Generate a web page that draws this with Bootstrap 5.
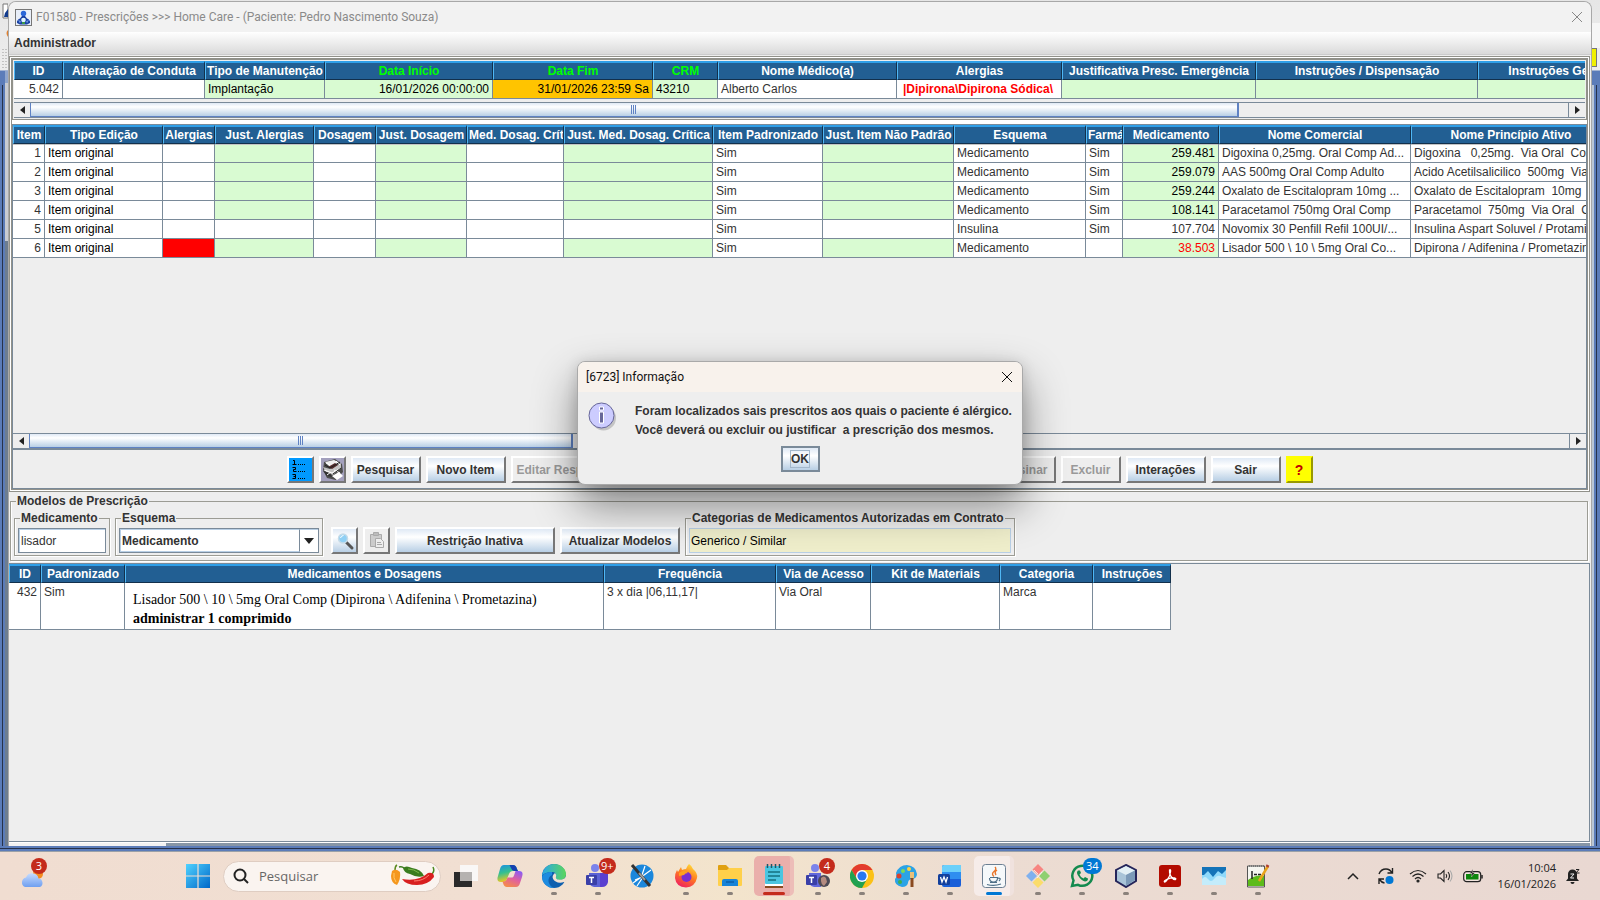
<!doctype html>
<html lang="pt-BR">
<head>
    <meta charset="utf-8">
    <meta name="viewport" content="width=device-width, initial-scale=1">
    <title>F01580 - Prescrições</title>
    <link href="https://cdn.jsdelivr.net/npm/bootstrap@5.3.3/dist/css/bootstrap.min.css" rel="stylesheet">
    <style>
        html, body { height: 100%; }
        body {
            display: flex;
            flex-direction: column;
            overflow: hidden;
            font-family: "Liberation Sans", Arial, sans-serif;
            font-size: 12px;
            line-height: 18px;
            color: #333;
            background: #eee;
        }
        svg { display: block; flex: none; }
        button { padding: 0; }

        /* Main application behind the window */
        .desk { flex: 1 1 0; min-height: 0; padding-top: 1px; background: linear-gradient(#e6e6e6 0, #ededed 70px, #5b7cb9 71px, #5b7cb9 100%); }
        .desk-row { flex: 1 1 0; min-height: 0; }
        .rail { width: 8px; flex: none; overflow: hidden; }
        .rail-top { height: 70px; }
        .rail-left { background: linear-gradient(90deg, transparent 2px, #26324a 2px, #26324a 3px, #5b7cb9 3px, #5b7cb9 5px, #6d7d90 5px) 0 84px no-repeat; }
        .rail-left .inner-frame { height: 170px; width: 3px; background: #c9ccd2; border-top: 12px solid #8fa5cc; }
        .rail-right { background: linear-gradient(90deg, #b9c6d6 2px, #5b7cb9 2px, #5b7cb9 4px, #26324a 4px, #26324a 5px, #5b7cb9 5px) 0 84px no-repeat; }
        .rail-yellow { height: 19px; width: 5px; background: #f0f000; border: 1px solid #777; border-left: 0; }
        .desk-foot { height: 6px; background: linear-gradient(#5b7cb9 2px, #26324a 2px, #26324a 3px, #5b7cb9 3px, #5b7cb9 5px, #9aa0a8 5px); }

        /* Prescription window */
        .win { flex: 1 1 0; min-width: 0; position: relative; display: flex; flex-direction: column; background: #eee; border: 1px solid #a8a8a8; border-bottom: 0; border-radius: 8px 8px 0 0; overflow: hidden; }
        .win-title { height: 30px; background: #f2f2f2; color: #8a8a8a; font-family: Roboto, "Noto Sans", sans-serif; font-size: 12px; padding: 0 8px 0 6px; }
        .win-menu { height: 22px; background: linear-gradient(#fff, #dadada); padding: 0 5px; }
        .plain-btn { border: 0; background: none; color: inherit; }
        .win-body { flex: 1 1 0; min-height: 0; padding: 1px 1px 0 0; border-top: 1px solid #ccc; }
        .outer-frame { border: 3px double #91918a; background: #fff; }
        .outer-frame > * { background: #eee; }
        .pane-head { border: 1px solid #91918a; padding: 1px 1px 1px 1px; margin-bottom: 4px; }
        .pane-head .hbar { margin-top: 3px; }
        .pane-items { border: 1px solid #7a8a99; border-bottom: 0; }
        .items-area { min-height: 308px; overflow: hidden; }
        .clip { overflow: hidden; }

        /* Data grids */
        .grid { table-layout: fixed; border-collapse: separate; border-spacing: 0; }
        .grid th, .grid td { height: 19px; overflow: hidden; white-space: pre; }
        .grid th { background: #225f93; color: #fff; text-align: center; line-height: 16px; padding: 0 1px; border-top: 2px solid #2f9fe8; border-left: 1px solid #4fb7f5; border-right: 1px solid #12304c; border-bottom: 1px solid #12304c; }
        .grid td { background: #fff; padding: 0 3px; border-right: 1px solid #7a8a99; border-bottom: 1px solid #7a8a99; }
        .grid th.key { color: #0f0; }
        .grid th.cut { text-align: left; padding-right: 0; }
        .grid td.ed { background: #d9fbd2; color: #000; }
        .grid td.num { text-align: right; }
        .grid td.blk { color: #000; }
        .grid td.hot { background: #f00; }
        .grid td.until { background: #ffc400; color: #000; text-align: right; }
        .grid td.bad { color: #f00; }
        .grid td.drug { font-weight: bold; padding-left: 6px; }
        .grid-items tbody tr:first-child td { box-shadow: inset 0 1px #c4c4c4; }
        .grid-models td { height: 47px; vertical-align: top; }
        .grid-models .dose { font-family: "Liberation Serif", "Times New Roman", serif; font-size: 14px; line-height: 19px; color: #000; padding: 7px 8px 0; }

        /* Scroll bars */
        .hbar { height: 16px; border-top: 1px solid #7a8a99; border-bottom: 1px solid #7a8a99; background: #eee; display: flex; }
        .hbar button { width: 16px; border: 0; background: #eee; display: flex; align-items: center; justify-content: center; }
        .hbar .track { flex: 1 1 0; border-left: 1px solid #5f82c3; border-right: 1px solid #7a8a99; display: flex; }
        .hbar .thumb { display: flex; align-items: center; justify-content: center; border-right: 2px solid #5f82c3; border-bottom: 1px solid #5f82c3; background: linear-gradient(#dfe9f5, #fff 30%, #b8cfe5); }

        /* Raised buttons */
        .jbtn { height: 27px; border: 2px solid; border-color: #fff #777 #777 #fff; background: linear-gradient(#dfe9f5, #fff 35%, #b8cfe5); color: #333; font-weight: bold; display: flex; align-items: center; justify-content: center; white-space: nowrap; flex: none; }
        .jbtn:disabled { background: #eee; color: #999; }
        .w27 { width: 27px; } .w60 { width: 60px; } .w70 { width: 70px; } .w80 { width: 80px; }
        .w110 { width: 110px; } .w120 { width: 120px; } .w160 { width: 160px; }
        .mid-space { width: 365px; }
        .actions { border: 1px solid #7a8a99; padding: 6px 0 5px; gap: 5px; }
        .btn-list { background: #09f; }
        .btn-help { background: #ff0; border-color: #ff0 #999900 #999900 #ff0; color: #c00000; font-size: 14px; }

        /* Titled groups */
        .group { border: 1px solid #9c9c94; box-shadow: inset 1px 0 #fff, 1px 1px #fff; min-width: 0; }
        .group legend { float: none; width: auto; margin: 0; padding: 0 1px; font-size: 12px; font-weight: bold; line-height: 14px; margin-left: 2px; }
        .models { margin: 2px 2px 2px 1px; padding: 3px 3px 4px; }
        .models-row { gap: 5px; }
        .tools { margin: 0 0 2px 3px; }
        .group-in { padding: 3px 3px 2px; }
        .group-in input, .combo { height: 25px; border: 1px solid #7a8a99; box-shadow: inset 1px 1px #b8cfe5; }
        .group-in input { display: block; padding: 0 2px; color: #333; background: #fff; }
        .w88 { width: 88px; }
        .combo { width: 200px; background: #fff; }
        .combo select { appearance: none; border: 1px solid #b8cfe5; border-right: 1px solid #7a8a99; background: none; padding: 0 1px; font-weight: bold; color: #333; flex: 1 1 0; min-width: 0; }
        .combo span { width: 18px; display: flex; align-items: center; justify-content: center; }
        .group-in .cats { width: 322px; border-color: #b8cfe5; box-shadow: none; color: #000; background: #efeecb; padding: 0 1px; }
        .lower { flex: 1 1 0; min-height: 0; border: 1px solid #7a8a99; border-left: 0; }
        .win-foot { height: 4px; background: linear-gradient(90deg, #f2f2f2 157px, #8796a6 157px); border-top: 1px solid #fff; }

        /* Message dialog */
        .dlg-layer { position: absolute; inset: 0 0 3px 0; display: flex; align-items: center; justify-content: center; }
        .dlg { width: 446px; border: 1px solid #a9a9a9; border-radius: 8px; overflow: hidden; background: #eee; box-shadow: 0 20px 44px rgba(0,0,0,.45), 0 2px 14px rgba(0,0,0,.15); }
        .dlg-title { height: 30px; background: #f8f2ec; color: #111; font-family: Roboto, "Noto Sans", sans-serif; padding: 0 9px 0 8px; }
        .dlg-text { font-weight: bold; line-height: 19px; white-space: pre; }
        .dlg-main { padding: 10px 0 6px 10px; gap: 17px; }
        .dlg-ok { width: 39px; height: 26px; border: 2px solid #7a8a99; background: linear-gradient(#dfe9f5, #fff 35%, #b8cfe5); font-weight: bold; color: #333; margin-bottom: 12px; display: flex; align-items: center; justify-content: center; }
        .dlg-ok span { border: 1px solid #a3b8cc; line-height: 16px; }

        /* Taskbar */
        .taskbar { height: 48px; flex: none; background: linear-gradient(90deg, #f0ddd1, #f1dfd2 30%, #f3e4cc 46%, #ecdcd2 62%, #e9d8d2); font-family: "Open Sans", "Noto Sans", sans-serif; color: #222; }
        .weather { width: 176px; padding-left: 20px; }
        .task { width: 44px; height: 48px; border: 0; background: none; position: relative; display: flex; align-items: center; justify-content: center; flex: none; }
        .task.on::after { content: ""; position: absolute; bottom: 5px; left: 19px; width: 6px; height: 3px; border-radius: 2px; background: #8a817b; }
        .task.alert-on::before, .task.cur::before { content: ""; position: absolute; inset: 4px 2px; border-radius: 5px; background: #eaafab; border-right: 4px solid #edbdb8; }
        .task.cur::before { background: #f6ece9; border-right-color: #f0e2de; }
        .task.alert-on::after { left: 11px; width: 22px; background: #c42b1c; }
        .task.cur::after { left: 14px; width: 16px; background: #0078d4; }
        .task svg { position: relative; }
        .bubble { position: absolute; top: 6px; left: 23px; min-width: 16px; height: 16px; border-radius: 8px; background: #c42b1c; color: #fff; font-size: 11px; line-height: 16px; text-align: center; padding: 0 2px; }
        .bubble.blue { background: #0078d4; padding: 0 3px; }
        .weather .bubble { top: -3px; left: 31px; }
        .searchbox { width: 218px; height: 31px; border-radius: 16px; background: #faf4f0; border: 1px solid #dfcdc2; padding: 0 4px 0 9px; margin: 0 3px; gap: 10px; }
        .searchbox input { border: 0; background: none; outline: 0; min-width: 0; flex: 1 1 0; font-size: 13px; padding: 0; }
        .searchbox input::placeholder { color: #666; opacity: 1; }
        .tray { padding-right: 20px; gap: 10px; }
        .clock { font-size: 11px; line-height: 16px; text-align: right; margin-left: 5px; }
    </style>
</head>
<body>
    <main class="desk d-flex flex-column">
        <div class="desk-row d-flex">
            <div class="rail rail-left">
                <div class="rail-top">
                    <svg width="8" height="70"><path d="M3 3h5v14H3z" fill="#fff" stroke="#777"/><path d="M5 12l3-4v8H4z" fill="#123b8c"/><path d="M8 29q-3 3 0 7z" fill="#e08030"/><path d="M3 48v20M6 48v20" stroke="#999" stroke-dasharray="1 2"/></svg>
                </div>
                <div class="d-flex justify-content-end"><div class="inner-frame"></div></div>
            </div>

            <section class="win">
                <header class="win-title d-flex align-items-center justify-content-between">
                    <div class="d-flex align-items-center gap-1">
                        <svg width="17" height="17" viewBox="0 0 17 17"><rect x=".5" y=".5" width="16" height="16" fill="#e8eef8" stroke="#777"/><circle cx="8.500" cy="4.500" r="2.700" fill="#2a66d8"/><path d="M2 14q-.5-3 3-4.500L7 7h3l2 2.500q3.500 1.500 3 4.500l-3 1.500H5z" fill="#173fa3"/><circle cx="8.500" cy="11" r="2.300" fill="#dff4ff"/><path d="M3 11l3 1-1 2.500zM14 11l-3 1 1 2.500z" fill="#6d93e0"/><path d="M7 13h3v2H7z" fill="#3a9a4a"/></svg>
                        <span>F01580 - Prescrições &gt;&gt;&gt; Home Care - (Paciente: Pedro Nascimento Souza)</span>
                    </div>
                    <button class="plain-btn" type="button" aria-label="Fechar janela"><svg width="12" height="12"><path d="M1 1l10 10M11 1L1 11" stroke="#888" fill="none"/></svg></button>
                </header>
                <nav class="win-menu d-flex align-items-center"><button class="plain-btn fw-bold" type="button">Administrador</button></nav>

                <div class="win-body d-flex flex-column">
                    <div class="outer-frame">
                        <!-- Cabeçalho da prescrição -->
                        <div class="pane-head">
                            <div class="clip">
                                <table class="grid" style="width:1626px">
                                    <colgroup><col style="width:49px"><col style="width:142px"><col style="width:120px"><col style="width:168px"><col style="width:160px"><col style="width:65px"><col style="width:179px"><col style="width:165px"><col style="width:194px"><col style="width:222px"><col style="width:162px"></colgroup>
                                    <thead><tr><th>ID</th><th>Alteração de Conduta</th><th>Tipo de Manutenção</th><th class="key">Data Início</th><th class="key">Data Fim</th><th class="key">CRM</th><th>Nome Médico(a)</th><th>Alergias</th><th>Justificativa Presc. Emergência</th><th>Instruções / Dispensação</th><th>Instruções Gerais</th></tr></thead>
                                    <tbody><tr><td class="num">5.042</td><td></td><td class="ed">Implantação</td><td class="ed num">16/01/2026 00:00:00</td><td class="until">31/01/2026 23:59 Sa</td><td class="ed">43210</td><td>Alberto Carlos</td><td class="bad drug">|Dipirona\Dipirona Sódica\</td><td class="ed"></td><td class="ed"></td><td class="ed"></td></tr></tbody>
                                </table>
                            </div>
                            <div class="hbar">
                                <button type="button" aria-label="Rolar para a esquerda"><svg width="5" height="8"><path d="M5 0v8L0 4z" fill="#222"/></svg></button>
                                <div class="track"><div class="thumb" style="width:78.6%"><svg width="6" height="9"><path d="M.5 0v9M2.500 0v9M4.500 0v9" stroke="#5f82c3"/></svg></div></div>
                                <button type="button" aria-label="Rolar para a direita"><svg width="5" height="8"><path d="M0 0v8l5-4z" fill="#222"/></svg></button>
                            </div>
                        </div>

                        <!-- Itens prescritos -->
                        <div class="pane-items">
                            <div class="items-area">
                                <table class="grid grid-items" style="width:1598px">
                                    <colgroup><col style="width:32px"><col style="width:118px"><col style="width:52px"><col style="width:99px"><col style="width:62px"><col style="width:91px"><col style="width:97px"><col style="width:149px"><col style="width:110px"><col style="width:131px"><col style="width:132px"><col style="width:37px"><col style="width:96px"><col style="width:192px"><col style="width:200px"></colgroup>
                                    <thead><tr><th>Item</th><th>Tipo Edição</th><th>Alergias</th><th>Just. Alergias</th><th>Dosagem</th><th>Just. Dosagem</th><th class="cut">Med. Dosag. Crít</th><th>Just. Med. Dosag. Crítica</th><th>Item Padronizado</th><th>Just. Item Não Padrão</th><th>Esquema</th><th class="cut">Farmá</th><th>Medicamento</th><th>Nome Comercial</th><th>Nome Princípio Ativo</th></tr></thead>
                                    <tbody>
                                        <tr><td class="num">1</td><td class="blk">Item original</td><td></td><td class="ed"></td><td></td><td class="ed"></td><td></td><td class="ed"></td><td>Sim</td><td class="ed"></td><td>Medicamento</td><td>Sim</td><td class="ed num">259.481</td><td>Digoxina 0,25mg. Oral Comp Ad...</td><td>Digoxina   0,25mg.  Via Oral  Comp</td></tr>
                                        <tr><td class="num">2</td><td class="blk">Item original</td><td></td><td class="ed"></td><td></td><td class="ed"></td><td></td><td class="ed"></td><td>Sim</td><td class="ed"></td><td>Medicamento</td><td>Sim</td><td class="ed num">259.079</td><td>AAS 500mg Oral Comp Adulto</td><td>Acido Acetilsalicilico  500mg  Via</td></tr>
                                        <tr><td class="num">3</td><td class="blk">Item original</td><td></td><td class="ed"></td><td></td><td class="ed"></td><td></td><td class="ed"></td><td>Sim</td><td class="ed"></td><td>Medicamento</td><td>Sim</td><td class="ed num">259.244</td><td>Oxalato de Escitalopram 10mg ...</td><td>Oxalato de Escitalopram  10mg</td></tr>
                                        <tr><td class="num">4</td><td class="blk">Item original</td><td></td><td class="ed"></td><td></td><td class="ed"></td><td></td><td class="ed"></td><td>Sim</td><td class="ed"></td><td>Medicamento</td><td>Sim</td><td class="ed num">108.141</td><td>Paracetamol 750mg Oral Comp</td><td>Paracetamol  750mg  Via Oral  Comp</td></tr>
                                        <tr><td class="num">5</td><td class="blk">Item original</td><td></td><td></td><td></td><td></td><td></td><td></td><td>Sim</td><td></td><td>Insulina</td><td>Sim</td><td class="num">107.704</td><td>Novomix 30 Penfill Refil 100UI/...</td><td>Insulina Aspart Soluvel / Protamina</td></tr>
                                        <tr><td class="num">6</td><td class="blk">Item original</td><td class="hot"></td><td class="ed"></td><td></td><td class="ed"></td><td></td><td class="ed"></td><td>Sim</td><td class="ed"></td><td>Medicamento</td><td></td><td class="ed num bad">38.503</td><td>Lisador 500 \ 10 \ 5mg Oral Co...</td><td>Dipirona / Adifenina / Prometazina</td></tr>
                                    </tbody>
                                </table>
                            </div>
                            <div class="hbar">
                                <button type="button" aria-label="Rolar para a esquerda"><svg width="5" height="8"><path d="M5 0v8L0 4z" fill="#222"/></svg></button>
                                <div class="track"><div class="thumb" style="width:35.3%"><svg width="6" height="9"><path d="M.5 0v9M2.500 0v9M4.500 0v9" stroke="#5f82c3"/></svg></div></div>
                                <button type="button" aria-label="Rolar para a direita"><svg width="5" height="8"><path d="M0 0v8l5-4z" fill="#222"/></svg></button>
                            </div>
                        </div>

                        <div class="actions d-flex justify-content-center">
                            <button class="jbtn w27 btn-list" type="button" aria-label="Numerar itens">
                                <svg width="23" height="23" viewBox="0 0 23 23" stroke="#000" fill="none"><path d="M4 2.500h1.500V6M3.500 6.500h4M3.500 9.500h3v2H4.500v2h3M3.500 16.500h3v4h-3M4.500 18.500h2"/><path d="M9 6.500h7M9 13.500h7M9 20.500h7" stroke-dasharray="1 1"/></svg>
                            </button>
                            <button class="jbtn w27" type="button" aria-label="Imprimir">
                                <svg width="23" height="23" viewBox="0 0 23 23"><path fill="#a3a0bd" d="M0 0h23v23H0z"/><path d="M3 4l11-3 7 5 1 8-7 8-9-2-4-8z" fill="#4c4c4c"/><path d="M4 4l9-2 6 3-10 4z" fill="#eee"/><path d="M2 9l7 2 11-6v5l-8 7-7-3z" fill="#c4c4c4"/><path d="M7 9l7-4 3 2-6 4z" fill="#532a2a"/><path d="M2 13l4 5 5 1-2-4z" fill="#333"/><path d="M11 18l7-4 4 4-6 4z" fill="#fff"/><path d="M5 5l4 2M15 3l4 4M3 12l8 3 9-5M13 12l6 3M6 17l4-3" stroke="#fff" fill="none"/><path d="M4 7l5 3 10-6M12 16l8-6" stroke="#222" fill="none"/></svg>
                            </button>
                            <button class="jbtn w70" type="button">Pesquisar</button>
                            <button class="jbtn w80" type="button">Novo Item</button>
                            <button class="jbtn w110" type="button" disabled>Editar Respostas</button>
                            <div class="mid-space"></div>
                            <button class="jbtn w60" type="button" disabled>Assinar</button>
                            <button class="jbtn w60" type="button" disabled>Excluir</button>
                            <button class="jbtn w80" type="button">Interações</button>
                            <button class="jbtn w70" type="button">Sair</button>
                            <button class="jbtn w27 btn-help" type="button">?</button>
                        </div>
                    </div>

                    <fieldset class="group models">
                        <legend>Modelos de Prescrição</legend>
                        <div class="models-row d-flex align-items-end">
                            <fieldset class="group group-in">
                                <legend><label for="med">Medicamento</label></legend>
                                <input class="w88" id="med" type="text" value="lisador">
                            </fieldset>
                            <fieldset class="group group-in">
                                <legend><label for="esquema">Esquema</label></legend>
                                <div class="combo d-flex">
                                    <select id="esquema"><option>Medicamento</option><option>Insulina</option></select>
                                    <span><svg width="10" height="6"><path d="M0 0h10L5 6z" fill="#222"/></svg></span>
                                </div>
                            </fieldset>
                            <div class="d-flex models-row tools">
                                <button class="jbtn w27" type="button" aria-label="Localizar"><svg width="20" height="20" viewBox="0 0 20 20"><path d="M11 11l6 6" stroke="#555" stroke-width="3" stroke-linecap="round"/><circle cx="8" cy="7.500" r="4.500" fill="#8fd0f5" stroke="#c6dbe8" stroke-width="1.500"/><path d="M5.500 7q.5-2.500 3-2.500" stroke="#fff" fill="none"/></svg></button>
                                <button class="jbtn w27" type="button" aria-label="Colar" disabled><svg width="20" height="20" viewBox="0 0 20 20" fill="#ccc" stroke="#aaa"><path d="M3.500 3.500h11v12h-11z"/><path d="M6.500 1.500h5v3h-5z" fill="#bbb"/><path d="M8.500 7.500h5l3 3v6h-8z" fill="#eee"/><path d="M10 11.500h4M10 13.500h5"/></svg></button>
                                <button class="jbtn w160" type="button">Restrição Inativa</button>
                                <button class="jbtn w120" type="button">Atualizar Modelos</button>
                            </div>
                            <fieldset class="group group-in">
                                <legend><label for="cats">Categorias de Medicamentos Autorizadas em Contrato</label></legend>
                                <input class="cats" id="cats" type="text" value="Generico / Similar" readonly>
                            </fieldset>
                        </div>
                    </fieldset>

                    <div class="lower clip">
                        <table class="grid grid-models" style="width:1162px">
                            <colgroup><col style="width:32px"><col style="width:84px"><col style="width:479px"><col style="width:172px"><col style="width:95px"><col style="width:129px"><col style="width:93px"><col style="width:78px"></colgroup>
                            <thead><tr><th>ID</th><th>Padronizado</th><th>Medicamentos e Dosagens</th><th>Frequência</th><th>Via de Acesso</th><th>Kit de Materiais</th><th>Categoria</th><th>Instruções</th></tr></thead>
                            <tbody><tr><td class="num">432</td><td>Sim</td><td class="dose">Lisador 500 \ 10 \ 5mg Oral Comp (Dipirona \ Adifenina \ Prometazina)<br><b>administrar 1 comprimido</b></td><td>3 x dia |06,11,17|</td><td>Via Oral</td><td></td><td>Marca</td><td></td></tr></tbody>
                        </table>
                    </div>
                    <div class="win-foot"></div>
                </div>

                <div class="dlg-layer">
                    <div class="dlg" role="dialog" aria-labelledby="dlgTitle">
                        <div class="dlg-title d-flex align-items-center justify-content-between">
                            <span id="dlgTitle">[6723] Informação</span>
                            <button class="plain-btn" type="button" aria-label="Fechar"><svg width="12" height="12"><path d="M1 1l10 10M11 1L1 11" stroke="#111" fill="none"/></svg></button>
                        </div>
                        <div class="dlg-main d-flex">
                            <svg width="30" height="30" viewBox="0 0 30 30"><circle cx="15.500" cy="16" r="12.500" fill="#c4c4c4"/><circle cx="13.500" cy="13.500" r="12.500" fill="#ccccff" stroke="#666699"/><path d="M11.500 5h4v3h-4zM11.500 10h4v11h-4z" fill="#666699" stroke="#fff"/></svg>
                            <div class="dlg-text">Foram localizados sais prescritos aos quais o paciente é alérgico.
Você deverá ou excluir ou justificar  a prescrição dos mesmos.</div>
                        </div>
                        <div class="d-flex justify-content-center"><button class="dlg-ok" type="button"><span>OK</span></button></div>
                    </div>
                </div>
            </section>

            <div class="rail rail-right">
                <svg width="8" height="47"><path d="M0 22h8v25H0z" fill="#f6f6f6"/></svg>
                <div class="rail-yellow"></div>
            </div>
        </div>
        <div class="desk-foot"></div>
    </main>

    <footer class="taskbar d-flex align-items-center">
        <div class="weather position-relative">
            <svg width="25" height="30" viewBox="0 0 25 30"><defs><linearGradient id="cl" x2="0" y2="1"><stop stop-color="#c6dcff"/><stop offset="1" stop-color="#6f9ff0"/></linearGradient></defs><circle cx="18" cy="13" r="5" fill="#f58b1f"/><path d="M5 26a5 5 0 0 1 1-9.500 6.500 6.500 0 0 1 12.500 1A4.500 4.500 0 0 1 20 26z" fill="url(#cl)"/></svg>
            <span class="bubble">3</span>
        </div>
        <button class="task" type="button" aria-label="Iniciar"><svg width="24" height="24" viewBox="0 0 24 24"><defs><linearGradient id="wn" x2="1" y2="1"><stop stop-color="#4fd2ff"/><stop offset="1" stop-color="#0067c8"/></linearGradient></defs><path d="M0 0h11.400v11.400H0zM12.600 0H24v11.400H12.600zM0 12.600h11.400V24H0zM12.600 12.600H24V24H12.600z" fill="url(#wn)"/></svg></button>
        <div class="searchbox d-flex align-items-center">
            <svg width="16" height="16" fill="none" stroke="#222" stroke-width="2"><circle cx="7" cy="7" r="5.500"/><path d="M11 11l4 4"/></svg>
            <input type="text" placeholder="Pesquisar" aria-label="Pesquisar">
            <svg width="46" height="24" viewBox="0 0 46 24"><path d="M5 6q0-4 2-5" stroke="#5a8a20" fill="none" stroke-width="1.500"/><path d="M2 7q4-3 8 1 1 7-3 13-6-2-6-9z" fill="#f5971d"/><path d="M4 9q-1 5 2 9" stroke="#ffc766" fill="none"/><path d="M9 3q3-1 5 1" stroke="#3b7c1e" stroke-width="1.500" fill="none"/><path d="M13 4q3-3 9 0 9 1 12 8-7 2-14-2-6-1-7-6z" fill="#3b7c1e"/><path d="M18 5q6 0 11 4" stroke="#79b648" fill="none"/><path d="M42 10q3-3 1-7" stroke="#4a8a20" stroke-width="1.500" fill="none"/><path d="M12 15q16 3 26-6 6-1 6 4-6 8-17 8-11 0-15-6z" fill="#d81f1f"/><path d="M24 17q9 0 15-6" stroke="#ff7d70" fill="none"/></svg>
        </div>
        <button class="task" type="button" aria-label="Visão de tarefas"><svg width="24" height="24" viewBox="0 0 24 24"><path d="M0 8h18v15H0z" fill="#2a2a2a"/><path d="M6 1h18v16H6z" fill="#fafafa" opacity=".9"/><path d="M6 8h12v9H6z" fill="#b5b2b0"/></svg></button>
        <button class="task" type="button" aria-label="Copilot"><svg width="26" height="24" viewBox="0 0 26 24"><defs><linearGradient id="ca" x2=".3" y2="1"><stop stop-color="#1a8fe8"/><stop offset=".5" stop-color="#35c08f"/><stop offset="1" stop-color="#f6c81c"/></linearGradient><linearGradient id="cb" x1=".8" x2=".3" y2="1"><stop stop-color="#8a5cf5"/><stop offset=".5" stop-color="#e0609f"/><stop offset="1" stop-color="#f58b4a"/></linearGradient></defs><path d="M7 1h9q3 0 4 4l1 2h-5q-3 0-4 3l-2 5q-1 3-4 3H4q-5 0-3-6l2-7q1-4 4-4z" fill="url(#ca)"/><path d="M19 23h-9q-3 0-4-4l-.500-1.500Q9 18 10 15l.5-1.500h5q1-.5 1.500-2L18.500 7H22q5 0 3 6l-2 6q-1 4-4 4z" fill="url(#cb)"/><path d="M12.500 1H16q3 0 4 4l1 2h-4q-2 0-3-3z" fill="#1540b0"/></svg></button>
        <button class="task on" type="button" aria-label="Edge"><svg width="24" height="24" viewBox="0 0 24 24"><defs><linearGradient id="eg" x2="1"><stop stop-color="#2aa7e8"/><stop offset="1" stop-color="#5bd65b"/></linearGradient></defs><circle cx="12" cy="12" r="12" fill="#0f5fae"/><path d="M0 12C1 4 6 0 12 0c7 0 12 5 12 10 0 4-3 6-6 6s-5-1-4-3c1-3-1-5-4-5C5 8 1 10 0 12z" fill="url(#eg)"/><path d="M10 8C5 8 1 10 0 13c0 6 5 11 12 11-7-3-7-11-2-13z" fill="#1d8be0"/><path d="M13 9c-6 4 0 12 9 9l1 1-2 2 3-5V12l-1 2c-3 3-10 2-9-1q1-2-1-4z" fill="#f2e1d2"/></svg></button>
        <button class="task on" type="button" aria-label="Teams"><svg width="24" height="24" viewBox="0 0 24 24"><circle cx="9" cy="4" r="4" fill="#7b83eb"/><path d="M3 9h12v14H8q-5-1-5-7z" fill="#5b62d6"/><path d="M14 9h8v9q-1 5-6 5h-2z" fill="#5a3fd0"/><rect y="11" width="11" height="10" rx="1" fill="#3a3fa8"/><path d="M3 13.500h5M5.500 13.500V19" stroke="#fff" stroke-width="1.500"/></svg><span class="bubble">9+</span></button>
        <button class="task" type="button" aria-label="Aplicativo remoto"><svg width="24" height="24" viewBox="0 0 24 24"><circle cx="12" cy="12" r="11.500" fill="#1b87dc"/><path d="M3 19L21 6M7 22l6-9M15 2l-3 9M5 16l7-3" stroke="#fff" stroke-width="1.200"/><path d="M2 1l18 21" stroke="#333" stroke-width="3"/><path d="M9 9l6 7" stroke="#999" stroke-width="2"/></svg></button>
        <button class="task on" type="button" aria-label="Firefox"><svg width="24" height="24" viewBox="0 0 24 24"><defs><linearGradient id="ff" x1=".8" y1="0" x2=".3" y2="1"><stop stop-color="#ffe23a"/><stop offset=".5" stop-color="#ff7a1f"/><stop offset="1" stop-color="#f01f62"/></linearGradient></defs><path d="M15 0q3 2 4 5 5 4 4 9-2 9-11 9.500Q2 23 1 14q0-5 2-8l1 2 3-5 1 3q2-1 4-1 1-3 3-5z" fill="url(#ff)"/><circle cx="12.500" cy="13" r="5" fill="#7b2fd0"/><path d="M5 9q5-4 9 0-3 0-4 2l-5 1z" fill="#ffa21f"/></svg></button>
        <button class="task on" type="button" aria-label="Explorador de arquivos"><svg width="24" height="24" viewBox="0 0 24 24"><path d="M0 2q0-1 1-1h7l3 3h13v5H0z" fill="#e0a010"/><path d="M0 6h9l2-2h13v17q0 1-1 1H1q-1 0-1-1z" fill="#ffd04a"/><path d="M4 22v-5q0-2 2-2h12q2 0 2 2v5z" fill="#1683d8"/><path d="M8 18h8" stroke="#0b5ea8" stroke-width="1.500"/></svg></button>
        <button class="task on alert-on" type="button" aria-label="Bloco de notas"><svg width="20" height="24" viewBox="0 0 20 24"><path d="M1 20h18v4H1z" fill="#8a4a20"/><path d="M1 19h18v3H1z" fill="#fff"/><rect x="1" y="2" width="18" height="18" rx="1" fill="#4bc5e0"/><path d="M3.500 0v4M7.500 0v4M11.500 0v4M15.500 0v4" stroke="#1e5666" stroke-width="1.500"/><path d="M4 8h12M4 12h12M4 16h8" stroke="#14707f" stroke-width="1.500"/></svg></button>
        <button class="task on" type="button" aria-label="Teams pessoal"><svg width="24" height="24" viewBox="0 0 24 24"><circle cx="9" cy="4" r="4" fill="#7b83eb"/><path d="M3 9h12v14H8q-5-1-5-7z" fill="#6268dc"/><rect y="11" width="11" height="10" rx="1" fill="#3a3fa8"/><path d="M3 13.500h5M5.500 13.500V19" stroke="#fff" stroke-width="1.500"/><circle cx="18" cy="17" r="6" fill="#4d4a55"/><path d="M15 14q3-3 5 0l1 4-3 4q-3-2-3-5z" fill="#b58b80"/></svg><span class="bubble">4</span></button>
        <button class="task on" type="button" aria-label="Chrome"><svg width="24" height="24" viewBox="0 0 24 24"><circle cx="12" cy="12" r="12" fill="#fbc116"/><path d="M1.600 6A12 12 0 0 1 22.400 6H12L7 15z" fill="#e33b2e"/><path d="M1.600 6A12 12 0 0 0 12 24l5-9H7z" fill="#21a151"/><circle cx="12" cy="12" r="6" fill="#fff"/><circle cx="12" cy="12" r="4.600" fill="#2a78ee"/></svg></button>
        <button class="task on" type="button" aria-label="Paint"><svg width="24" height="24" viewBox="0 0 24 24"><path d="M13 1q9 1 10 9 0 5-6 5-3 1-3 4-1 4-6 4-8-2-7-8 2-2 1-6 3-8 11-8z" fill="#2ba3e6"/><circle cx="9" cy="7" r="2" fill="#7ed957"/><circle cx="15" cy="5" r="2" fill="#ffd23f"/><circle cx="5" cy="12" r="2.500" fill="#d6402f"/><circle cx="6" cy="18" r="2" fill="#3fae4e"/><path d="M16 8h4v6h-4z" fill="#e8c07a"/><path d="M16.500 14h3v9h-3z" fill="#8a4a20"/></svg></button>
        <button class="task on" type="button" aria-label="Word"><svg width="24" height="24" viewBox="0 0 24 24"><rect x="4" y="1" width="19" height="22" rx="2" fill="#1a5fd8"/><path d="M6 1h17v7H4V3q0-2 2-2z" fill="#6cd0fa"/><path d="M4 8h19v7H4z" fill="#2f8ef0"/><rect y="10" width="12" height="11" rx="1.500" fill="#123f9c"/><path d="M2.500 13l1.500 5 2-5 2 5 1.500-5" stroke="#fff" stroke-width="1.300" fill="none"/></svg></button>
        <button class="task on cur" type="button" aria-label="Java"><svg width="24" height="24" viewBox="0 0 24 24"><rect x=".5" y=".5" width="23" height="23" rx="3" fill="#f5f8fa" stroke="#6b7f92"/><path d="M13 3q2 2-1 4.500t0 5M15 6q-3 2-1 5" stroke="#e8762b" stroke-width="1.400" fill="none"/><path d="M8 13.500h8M7.500 14q0 4 4 4t4-4M8 18.500h7M5 20.500q7 2 14-.5M16 14q4 0 1 3" stroke="#4f7088" stroke-width="1.200" fill="none"/></svg></button>
        <button class="task on" type="button" aria-label="Git"><svg width="24" height="24" viewBox="0 0 24 24"><path d="M12 0l5.500 5.500L12 11 6.500 5.500z" fill="#f78581"/><path d="M0 12l5.500-5.500L11 12l-5.500 5.500z" fill="#7fb0ee"/><path d="M13 12l5.500-5.500L24 12l-5.500 5.500z" fill="#8fd071"/><path d="M12 13l5.500 5.500L12 24l-5.500-5.500z" fill="#fbdc6b"/><path d="M8 6l4 4M16 8l-5 6" stroke="#fff" opacity=".7"/></svg></button>
        <button class="task on" type="button" aria-label="WhatsApp"><svg width="24" height="24" viewBox="0 0 24 24"><path d="M2 22l1.500-5.500A10 10 0 1 1 8 20.800z" fill="none" stroke="#138a4e" stroke-width="2.500"/><path d="M8 6.500q-2 2 0 5 3 5 7 6 3 0 3-3l-3-1.500-1.500 1.500q-3-1-4-4L11 9l-1-2.500z" fill="#138a4e"/></svg><span class="bubble blue">34</span></button>
        <button class="task on" type="button" aria-label="VirtualBox"><svg width="24" height="24" viewBox="0 0 24 24"><path d="M12 1l10 5v11l-10 6-10-6V6z" fill="#a9c4d8" stroke="#25255a" stroke-width="2"/><path d="M12 2l9 4.500-9 4.500-9-4.500z" fill="#e3f0f5"/><path d="M12 11l9-4.500V16l-9 6z" fill="#7c9ab8"/></svg></button>
        <button class="task on" type="button" aria-label="Acrobat"><svg width="22" height="22" viewBox="0 0 22 22"><rect width="22" height="22" rx="3" fill="#b30b00"/><path d="M10.500 5q1.500-1 1 2-.5 4-3 7.500-2 3-3 2.500-1-1 3-2.800 4-1.700 7-1.200 2 .5 1 1.500-2 .5-4.500-3Q10 8 10.500 5z" fill="none" stroke="#fff" stroke-width="1.300"/></svg></button>
        <button class="task on" type="button" aria-label="Monitor"><svg width="24" height="18" viewBox="0 0 24 18"><path d="M0 0h24v18H0z" fill="#1473b8"/><path d="M0 8h2l4-4 5 6 5-6 4 3 4-4v15H0z" fill="#8fd9fa"/><path d="M0 12q3-4 6 0t6 0 6-3 6 2v7H0z" fill="#c4ecfb"/></svg></button>
        <button class="task on" type="button" aria-label="Notepad++"><svg width="24" height="24" viewBox="0 0 24 24"><path d="M1.500 2h17v21h-17z" fill="#f5f5f0" stroke="#555"/><path d="M2 16q8-6 16-4v10H2z" fill="#5dbb1a"/><path d="M3 2h15" stroke="#777" stroke-width="2" stroke-dasharray="1 1"/><path d="M6 7v8M8 10.500h3M12 10.500h3" stroke="#222" stroke-width="1.500"/><path d="M13 17L22 2" stroke="#e8a31c" stroke-width="2.500"/><path d="M21 3l1-2" stroke="#b04030" stroke-width="3"/></svg></button>

        <div class="tray d-flex align-items-center ms-auto">
            <svg width="12" height="8" fill="none" stroke="#222" stroke-width="1.500"><path d="M1 7l5-5 5 5"/></svg>
            <svg class="ms-2" width="18" height="18" viewBox="0 0 18 18" fill="none" stroke="#222" stroke-width="1.400"><path d="M2 7q2-5 7-5 4 0 6 4M15.500 1v5h-5M2 17v-5h5M2.500 12.500q2 3 5 3.500"/><circle cx="12.500" cy="13" r="4" fill="#0078d4" stroke="none"/></svg>
            <svg class="ms-1" width="18" height="14" viewBox="0 0 18 14" fill="none" stroke="#222" stroke-width="1.200"><path d="M1 5q8-7 16 0M3.500 7.500q5.500-5 11 0M6 10q3-3 6 0"/><circle cx="9" cy="12" r="1" fill="#222"/></svg>
            <svg width="16" height="14" viewBox="0 0 16 14" fill="none" stroke="#222" stroke-width="1.100"><path d="M1 5h2.500L7 1.500v11L3.500 9H1zM9 5q1.500 2 0 4M11 3q3 4 0 8"/><path d="M13 1.500q4 5.500 0 11" stroke="#aaa"/></svg>
            <svg width="20" height="14" viewBox="0 0 20 14"><rect x=".7" y="2.700" width="17" height="10" rx="3" fill="#f2e4de" stroke="#222" stroke-width="1.200"/><path d="M3 5h12.500v5.500H3z" fill="#0d860d"/><path d="M19 6v3.500" stroke="#222" stroke-width="1.500"/><path d="M10 0L6.500 4.500H9L8.500 8 12 3.500H9.500z" fill="#222" stroke="#f2e4de" stroke-width=".4"/></svg>
            <div class="clock">10:04<br>16/01/2026</div>
            <svg width="14" height="16" viewBox="0 0 14 16"><path d="M0 13l2-2.500V6a4.500 4.500 0 0 1 9 0v4.500L13 13z" fill="#222"/><path d="M4.500 14a2 2 0 0 0 4 0z" fill="#222"/><path d="M4.500 6H8l-3.500 4H8" stroke="#eee" fill="none"/><path d="M10 1.500h3L10 5h3.500" stroke="#222" fill="none"/></svg>
        </div>
    </footer>

    <script src="https://cdn.jsdelivr.net/npm/bootstrap@5.3.3/dist/js/bootstrap.bundle.min.js"></script>
</body>
</html>
